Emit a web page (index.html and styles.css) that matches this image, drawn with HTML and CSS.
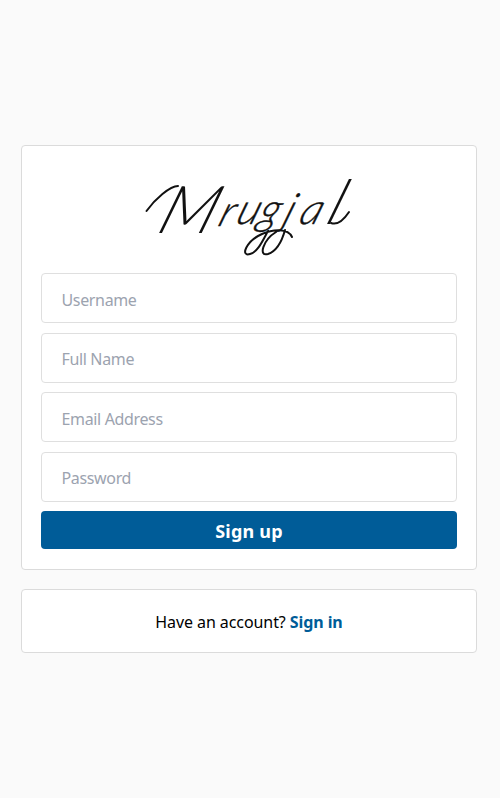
FILE: index.html
```html
<!DOCTYPE html>
<html lang="en">
<head>
    <meta charset="UTF-8">
    <meta name="viewport" content="width=device-width, initial-scale=1.0">
    <title>Sign up - Mrugjal</title>
    <link rel="stylesheet" href="styles.css">
</head>
<body>

<main class="container">
    <section class="card signup">
        <h1 class="logo">
            <svg class="logo-image" width="216" height="92" viewBox="0 0 216 92" role="img" aria-label="Mrugjal">
                <text class="logo-text" transform="translate(0 67) skewX(-20)"><tspan class="logo-first" x="14" y="0">M</tspan><tspan x="73 90 112 137 153" y="-7 -9 -9 -9 -9">rugja</tspan><tspan class="logo-last" x="180" y="-9">l</tspan></text>
                <!-- flourishes around the name -->
                <path class="logo-line" d="M5.500 45C14 33 29 20 37 20"/>
                <path class="logo-line" d="M151 71C147 62 132 63 121 68C105 75 99 91 109 88C117 86 122 74 127 65M135 66C122 74 117 91 127 88C136 85 141 75 144 64"/>
                <path class="logo-line" d="M190 57C198 60 204 52 208 46"/>
            </svg>
        </h1>
        <form class="signup-form">
            <input type="text" class="field" placeholder="Username" aria-label="Username">
            <input type="text" class="field" placeholder="Full Name" aria-label="Full Name">
            <input type="text" class="field" placeholder="Email Address" aria-label="Email Address">
            <input type="password" class="field" placeholder="Password" aria-label="Password">
            <button type="submit" class="signup-button">Sign up</button>
        </form>
    </section>

    <section class="card signin">
        <p>Have an account? <a href="#" class="signin-link">Sign in</a></p>
    </section>
</main>

</body>
</html>
```

FILE: styles.css
```css
* {
    box-sizing: border-box;
}
body {
    margin: 0;
    min-height: 100vh;
    background-color: #fafafa;
    font-family: "Noto Sans", "Open Sans", sans-serif;
    font-size: 16px;
    color: #000;
    display: flex;
    justify-content: center;
    align-items: center;
}
.container {
    width: 456px;
    margin-right: 2px;
    display: flex;
    flex-direction: column;
    gap: 19px;
}
.card {
    background-color: #fff;
    border: 1px solid #dbdbdb;
    border-radius: 4px;
}
.signup {
    height: 425px;
    padding: 20px 19px;
}
.logo {
    display: flex;
    justify-content: center;
    height: 88px;
    margin: 0 0 19.4px;
}
.logo-image {
    overflow: visible;
}
.logo-text {
    font-family: Lato, sans-serif;
    font-size: 43px;
    font-style: italic;
    font-weight: 300;
    fill: #111;
    stroke: #111;
    stroke-width: 0.4px;
}
.logo-first {
    font-size: 66px;
    stroke: none;
}
.logo-last {
    font-size: 62px;
    stroke: none;
}
.logo-line {
    fill: none;
    stroke: #111;
    stroke-width: 2;
    stroke-linecap: round;
}
.signup-form {
    display: flex;
    flex-direction: column;
    gap: 9.4px;
}
.field {
    width: 100%;
    height: 50px;
    padding: 3px 20px 0 19.5px;
    border: 1px solid #dfdfdf;
    border-radius: 4px;
    background-color: #fff;
    font-family: inherit;
    font-size: 16px;
    letter-spacing: -0.35px;
}
.field::placeholder {
    color: #9ca3af;
    opacity: 1;
}
.signup-button {
    width: 100%;
    height: 38px;
    padding: 2px 0 0;
    border: none;
    border-radius: 4px;
    background-color: #005c98;
    color: #fff;
    font-family: inherit;
    font-size: 18px;
    font-weight: 700;
    letter-spacing: 0.2px;
    cursor: pointer;
}
.signin {
    height: 64px;
    padding-top: 2px;
    display: flex;
    justify-content: center;
    align-items: center;
}
.signin p {
    margin: 0;
    letter-spacing: -0.08px;
}
.signin-link {
    color: #005c98;
    font-weight: 700;
    text-decoration: none;
}
```
